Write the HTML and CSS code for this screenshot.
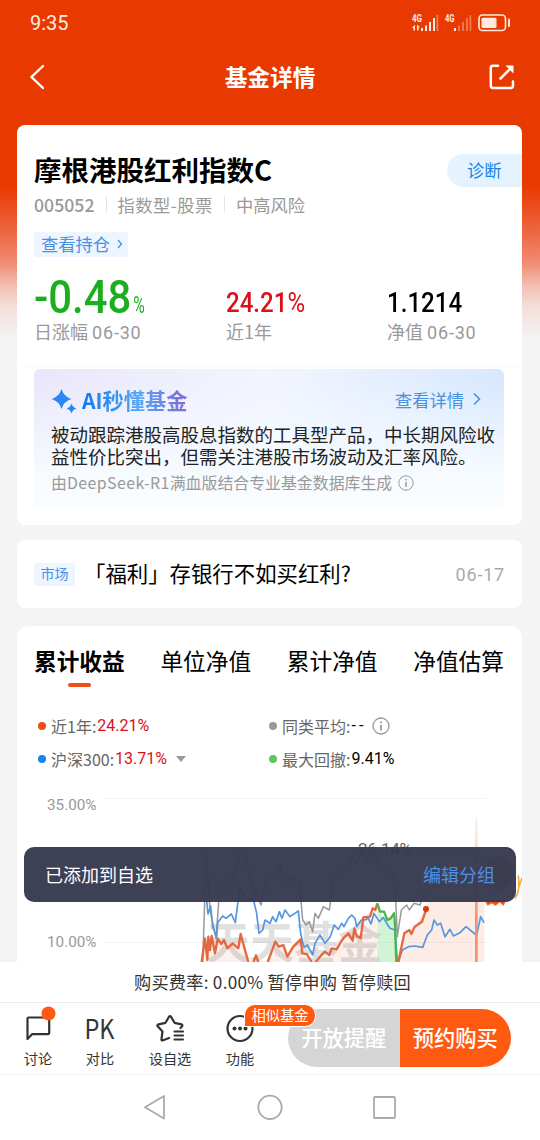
FILE: index.html
```html
<!DOCTYPE html>
<html lang="zh-CN">
<head>
    <meta charset="UTF-8">
    <meta name="viewport" content="width=device-width, initial-scale=1.0">
    <title>基金详情</title>
    <link rel="stylesheet" href="styles.css">
</head>
<body>
    <div class="status-bar">
        <span class="time">9:35</span>
        <svg class="status-icons" width="100" height="20" viewBox="411 13 100 20" fill="#ffe9e0">
            <text x="412" y="21.5" font-size="10" textLength="10" lengthAdjust="spacingAndGlyphs">4G</text>
            <path d="M412 28l3-3.5v6h-1.5V28zM417 24.5l3 3h-1.5v3H417z"/>
            <path d="M421 28h2v3h-2zM425 25.5h2v5.5h-2zM429 22h2v9h-2zM433 18h2v13h-2z"/>
            <path d="M436.5 15h1.8v16h-1.8z" opacity=".4"/>
            <text x="445" y="21.5" font-size="10" textLength="9.5" lengthAdjust="spacingAndGlyphs">4G</text>
            <path d="M454 28h2v3h-2z"/>
            <path d="M458 25.5h2v5.5h-2zM462 22h2v9h-2zM466 18h2v13h-2zM469.5 15h1.8v16h-1.8z" opacity=".35"/>
            <rect x="479" y="15" width="26.5" height="15.5" rx="3.5" fill="none" stroke="#ffe9e0" stroke-width="1.6"/>
            <rect x="481.5" y="17.7" width="15" height="10.2" rx="1.5"/>
            <rect x="508" y="18.5" width="2" height="8.5" rx="1"/>
        </svg>
    </div>

    <div class="nav-bar">
        <svg width="18" height="28" viewBox="0 0 18 28" fill="none" stroke="#fff" stroke-width="2.4" stroke-linecap="round"><path d="M14 3L2.5 14 14 25"/></svg>
        <h1 class="nav-title">基金详情</h1>
        <svg width="26" height="26" viewBox="0 0 26 26" fill="none" stroke="#fff" stroke-width="2.5" stroke-linecap="round"><path d="M9 1.800H4Q1.800 1.800 1.800 4V21.500Q1.800 24 4 24H21.500Q24 24 24 21.500V17.500M11.500 14.500L22 4"/><path d="M16.500 1.500H24.500V9.500z" fill="#fff" stroke="none"/></svg>
    </div>

    <main class="content">
        <section class="card fund-card">
            <div class="fund-info">
                <div class="fund-head">
                    <h2 class="fund-name">摩根港股红利指数C</h2>
                    <a class="diagnose">诊断</a>
                </div>
                <div class="fund-meta">
                    <span class="fund-code">005052</span>
                    <span class="fund-type">指数型-股票</span>
                    <span>中高风险</span>
                </div>
                <a class="holdings">查看持仓<svg width="6" height="10" viewBox="0 0 6 10" fill="none" stroke="#4a90e2" stroke-width="1.3"><path d="M1 1l3.500 4L1 9"/></svg></a>
                <div class="stats">
                    <div class="stat">
                        <div class="stat-value big green"><span class="din">-0.48<small>%</small></span></div>
                        <div class="stat-label">日涨幅 <span class="num">06-30</span></div>
                    </div>
                    <div class="stat">
                        <div class="stat-value red"><span class="din">24.21<i>%</i></span></div>
                        <div class="stat-label">近1年</div>
                    </div>
                    <div class="stat">
                        <div class="stat-value"><span class="din">1.1214</span></div>
                        <div class="stat-label">净值 <span class="num">06-30</span></div>
                    </div>
                </div>
            </div>
            <div class="ai-wrap">
                <div class="ai-box">
                    <div class="ai-head">
                        <svg width="27" height="26" viewBox="0 0 27 26" fill="#2e86f3"><path d="M10.500 1Q12.800 8.700 20.500 11 12.800 13.300 10.500 21 8.200 13.300.5 11 8.200 8.700 10.500 1z"/><path d="M20.500 15.500Q21.700 19.300 25.500 20.500 21.700 21.700 20.500 25.500 19.300 21.700 15.500 20.500 19.300 19.300 20.500 15.500z"/></svg>
                        <h3 class="ai-title">AI秒懂基金</h3>
                        <a class="ai-more">查看详情<svg width="8" height="14" viewBox="0 0 8 14" fill="none" stroke="#4a90e2" stroke-width="1.6"><path d="M1 1.500L6.500 7 1 12.500"/></svg></a>
                    </div>
                    <p class="ai-text">被动跟踪港股高股息指数的工具型产品，中长期风险收益性价比突出，但需关注港股市场波动及汇率风险。</p>
                    <p class="ai-source"><span>由<span class="model">DeepSeek-R1</span>满血版结合专业基金数据库生成</span><svg width="16" height="16" viewBox="0 0 16 16" fill="none" stroke="#999"><circle cx="8" cy="8" r="7.200"/><path d="M8 7v5M8 4v1.600" stroke-width="1.5"/></svg></p>
                </div>
            </div>
        </section>

        <section class="card news">
            <span class="news-tag">市场</span>
            <span class="news-title">「福利」存银行不如买红利?</span>
            <span class="news-date num">06-17</span>
        </section>

        <section class="card chart-card">
            <div class="tabs">
                <span class="tab active">累计收益</span>
                <span class="tab">单位净值</span>
                <span class="tab">累计净值</span>
                <span class="tab">净值估算</span>
            </div>
            <div class="legend">
                <div class="legend-item"><i class="dot orange"></i>近1年:<b class="red">24.21%</b></div>
                <div class="legend-item"><i class="dot gray"></i>同类平均:<b class="dashes">--</b><svg class="info" width="18" height="18" viewBox="0 0 18 18" fill="none" stroke="#999" stroke-width="1.3"><circle cx="9" cy="9" r="8"/><path d="M9 8v5.500M9 4.500v1.800" stroke-width="1.8"/></svg></div>
                <div class="legend-item"><i class="dot blue"></i>沪深300:<b class="red">13.71%</b><i class="caret"></i></div>
                <div class="legend-item"><i class="dot lime"></i>最大回撤:<b>9.41%</b></div>
            </div>
            <svg class="chart" width="505" height="172" viewBox="17 790 505 172">
                <path d="M104 798.500H486M104 942.500H486" stroke="#f3f3f3"/>
                <text x="47" y="810" class="axis" textLength="49.5" lengthAdjust="spacingAndGlyphs">35.00%</text>
                <text x="47" y="947" class="axis" textLength="49.5" lengthAdjust="spacingAndGlyphs">10.00%</text>
                <text x="206" y="959" class="watermark">天天基金</text>
                <g transform="translate(190 810) scale(.33333)" fill="none" stroke-linejoin="round">
                    <path d="M35 456L45 385 60 410 85 382 100 410 130 405 150 375 175 440 235 455 255 395 300 435 330 388 345 440 365 456 400 440 450 385 490 362 515 380 520 325 560 285 560 456z" fill="#ee6035" opacity=".09"/>
                    <path d="M562 285L578 325 608 320 615 340V456H562z" fill="#5bd765" opacity=".28"/>
                    <path d="M625 456L640 375 670 360 705 300 730 240 780 200 883 165V456z" fill="#f15a29" opacity=".12"/>
                    <path d="M38 456L44 280 48 125 60 300 78 385 88 250 110 220 120 240 128 200 142 160 150 125 165 120 180 210 195 245 213 285 225 225 240 190 252 200 270 165 280 215 305 205 328 215 338 330 348 345 358 335 368 365 375 310 385 325 400 290 418 300 430 215 450 185 470 180 480 140 500 160 515 125 530 160 550 110 575 180 605 190 615 220 622 380 634 300 650 285 658 300 672 280 690 285 705 240 740 220 780 225 820 205 860 215" stroke="#999" stroke-width="4.5"/>
                    <path d="M50 270L54 312 62 288 68 350 80 382 83 338 98 318 108 325 124 312 136 338 142 290 150 235 165 262 178 270 190 268 200 310 207 370 218 360 225 330 240 340 248 320 258 335 268 305 276 325 285 300 300 320 325 303 332 370 342 412 352 405 368 435 375 400 390 375 405 400 420 382 433 345 445 358 455 340 462 350 475 325 485 315 495 325 500 350 514 330 525 330 535 325 543 342 552 310 568 335 580 322 590 340 600 355 615 360 622 456M625 456L637 420 655 410 675 408 698 412 712 375 725 360 732 330 742 345 752 340 765 380 780 358 790 378 810 368 828 350 855 372 860 375 872 320 882 338" stroke="#5596df" stroke-width="5"/>
                    <path d="M35 456L45 385 52 450 55 380 60 420 65 378 75 430 83 386 94 402 102 390 112 415 128 400 145 415 152 372 160 402 175 456M190 456L198 436 205 456M233 456L256 395 267 410 280 405 292 440 310 410 332 388 337 430 350 432 365 456M377 456L390 440 405 425 418 435 425 415 440 418 450 400 460 385 475 370 488 392 493 355 500 378 512 385 520 322 540 320 548 295 556 300 562 280M625 456L643 370 658 360 664 372 674 350 696 335 708 300" stroke="#e56740" stroke-width="7"/>
                    <path d="M562 280L570 305 582 305 592 330 602 325 612 310 615 342 619 456" stroke="#49b54e" stroke-width="7"/>
                    <path d="M859 20V456" stroke="url(#stem)" stroke-width="8"/>
                    <path d="M695 118H860" stroke="#999" stroke-width="2"/>
                    <path d="M885 270L893 286 905 279 917 286 929 276 940 286 948 270" fill="#e8521f" stroke="#f1682d" stroke-width="3"/>
                    <path d="M976 264Q991 240 985 198M995 206L988 228" stroke="#f6ad3c" stroke-width="5" stroke-linecap="round"/>
                    <circle cx="922" cy="190" r="50" fill="#94492e" opacity=".4"/>
                    <circle cx="708" cy="297" r="9" fill="#d83b06"/>
                </g>
                <defs><linearGradient id="stem" gradientUnits="userSpaceOnUse" x1="0" y1="20" x2="0" y2="330"><stop stop-color="#f8a28a" stop-opacity=".1"/><stop offset="1" stop-color="#f09071"/></linearGradient></defs>
                <text x="358" y="855" class="peak" textLength="54">26.14%</text>
            </svg>
        </section>
    </main>

    <div class="toast"><span>已添加到自选</span><a>编辑分组</a></div>

    <footer>
        <div class="fee">购买费率: 0.00% 暂停申购 暂停赎回</div>
        <div class="toolbar">
            <div class="tool">
                <svg width="36" height="36" viewBox="20 1008 36 36" fill="none" stroke="#333" stroke-width="2.2" stroke-linejoin="round"><path d="M27.500 1039V1018.500Q27.500 1017.500 28.500 1017.500H48Q49.200 1017.500 49.200 1018.500V1033Q49.200 1034.200 48 1034.200H32z"/><circle cx="48.500" cy="1013.500" r="7" fill="#ff5a12" stroke="none"/></svg>
                <span>讨论</span>
            </div>
            <div class="tool">
                <svg width="36" height="36" viewBox="82 1008 36 36"><text x="84.500" y="1039" font-size="27" fill="#333" textLength="30" lengthAdjust="spacingAndGlyphs">PK</text></svg>
                <span>对比</span>
            </div>
            <div class="tool">
                <svg width="36" height="36" viewBox="152 1008 36 36" fill="none" stroke="#333" stroke-width="2.2" stroke-linejoin="round" stroke-linecap="round"><path d="M169 1038L162.500 1040.500Q161.300 1040.500 161.500 1039L162.500 1031.500 157.500 1026Q157 1024.800 158.500 1024.300L165.500 1022.800 169 1016.800Q170 1015.600 171 1016.800L174.500 1022.800 181.500 1024.300Q183 1025 182 1026.500L180.500 1028M174.500 1031.500H183M174.500 1035.500H183M174.500 1039.500H183"/></svg>
                <span>设自选</span>
            </div>
            <div class="tool">
                <svg width="36" height="36" viewBox="222 1008 36 36" fill="#333"><circle cx="240" cy="1028.500" r="12.500" fill="none" stroke="#333" stroke-width="2.2"/><circle cx="234.500" cy="1028.500" r="2"/><circle cx="240" cy="1028.500" r="2"/><circle cx="245.500" cy="1028.500" r="2"/></svg>
                <span>功能</span>
                <em class="badge">相似基金</em>
            </div>
            <div class="actions">
                <button class="btn remind">开放提醒</button>
                <button class="btn buy">预约购买</button>
            </div>
        </div>
        <div class="system-nav">
            <svg width="252" height="28" viewBox="144 1093 252 28" fill="none" stroke="#aaa" stroke-width="1.8" stroke-linejoin="round"><path d="M164 1096V1118.500L145 1107.300z"/><circle cx="270" cy="1107.300" r="11.700"/><rect x="374" y="1097" width="21" height="21" rx="1"/></svg>
        </div>
    </footer>
</body>
</html>
```

FILE: styles.css
```css
* {
    margin: 0;
    padding: 0;
    box-sizing: border-box;
}

body {
    font-family: 'Noto Sans CJK SC', sans-serif;
    width: 540px;
    height: 1140px;
    overflow: hidden;
    position: relative;
    display: flex;
    flex-direction: column;
    background: linear-gradient(#e83900 0, #e83900 185px, #ec5a2f 220px, #f08a70 262px, #f1bdb0 285px, #f3dfda 307px, #f4f4f4 340px);
}

svg {
    display: block;
    flex-shrink: 0;
}

.num {
    font-family: Roboto, sans-serif;
    letter-spacing: .8px;
}

.status-bar {
    height: 46px;
    padding: 0 29px 0 30px;
    display: flex;
    align-items: center;
    justify-content: space-between;
    color: #ffe9e0;
}

.time {
    font-family: Roboto, sans-serif;
    font-size: 20px;
}

.status-icons text {
    font-family: Roboto, sans-serif;
    font-weight: 700;
}

.nav-bar {
    height: 62px;
    padding: 0 25px 0 29px;
    display: flex;
    align-items: center;
    justify-content: space-between;
    color: #fff;
}

.nav-title {
    font-size: 22.7px;
    line-height: 30px;
    font-weight: 700;
    padding-left: 4px;
}

.content {
    height: 854px;
    padding: 17px 18px 0 17px;
    overflow: hidden;
    flex-shrink: 0;
}

.card {
    background: #fff;
    border-radius: 8px;
}

.fund-card {
    height: 400px;
    margin-bottom: 15px;
}

.fund-info {
    height: 242px;
    padding: 24px 0 0 17px;
    border-bottom: 1px solid #f8f8f8;
    border-radius: 8px;
}

.fund-head {
    display: flex;
    justify-content: space-between;
    align-items: center;
    height: 40px;
}

.fund-name {
    font-size: 27.5px;
    line-height: 40px;
    font-weight: 700;
    color: #000;
}

.diagnose {
    width: 75px;
    height: 33px;
    line-height: 32px;
    margin-top: 2px;
    padding-left: 20px;
    border-radius: 17px 0 0 17px;
    background: #e5f3ff;
    color: #1684e8;
    font-size: 17.3px;
}

.fund-meta {
    display: flex;
    align-items: center;
    height: 30px;
    font-size: 17.3px;
    color: #999;
}

.fund-meta span + span {
    margin-left: 11px;
    padding-left: 11px;
    border-left: 1px solid #e5e5e5;
    line-height: 17px;
}

.fund-type {
    letter-spacing: .5px;
}

.fund-code {
    font-size: 17.7px;
    font-weight: 500;
}

.holdings {
    display: flex;
    align-items: center;
    gap: 7px;
    width: 94px;
    height: 25px;
    margin-top: 13px;
    padding: 0 0 2px 7px;
    border-radius: 3px;
    background: #edf5ff;
    color: #4a90e2;
    font-size: 17.3px;
}

.stats {
    display: grid;
    grid-template-columns: 192px 161px 1fr;
    margin-top: 21px;
}

.stat-value {
    height: 41px;
    display: flex;
    align-items: flex-end;
    font-family: Roboto, sans-serif;
    font-size: 28px;
    line-height: 33px;
    font-weight: 500;
    color: #000;
}

.din {
    display: inline-block;
    transform: scaleX(.86);
    transform-origin: left bottom;
}

.stat-value i {
    font-style: normal;
    font-weight: 400;
}

.stat-value.big {
    font-size: 46px;
    line-height: 46px;
}

.big .din {
    margin-bottom: -9px;
    transform: scaleX(.91);
}

.stat-value small {
    font-size: 24px;
    font-weight: 400;
    display: inline-block;
    transform: scaleX(.72);
    transform-origin: left bottom;
    margin-left: 2px;
}

.stat-value.green {
    color: #1cae20;
}

.red,
.stat-value.red {
    color: #dc1018;
}

.stat-label {
    font-size: 18px;
    line-height: 24px;
    color: #999;
}

.ai-wrap {
    padding: 2px 18px 0 17px;
}

.ai-box {
    height: 138px;
    padding: 18px 9px 0 17px;
    border-radius: 6px 6px 0 0;
    background:
        linear-gradient(rgba(249, 252, 255, 0) 10%, #f6fbff 75%, #fafdff),
        linear-gradient(90deg, #e9e7fb, #f2f5ff 50%, #d8e8ff);
}

.ai-head {
    display: flex;
    align-items: center;
    height: 28px;
}

.ai-title {
    margin: -2px 0 0 4px;
    font-size: 21.2px;
    line-height: 28px;
    font-weight: 700;
    background: linear-gradient(90deg, #1479ed, #55a6f5 55%, #8168d8);
    -webkit-background-clip: text;
    background-clip: text;
    color: transparent;
}

.ai-more {
    display: flex;
    align-items: center;
    gap: 9px;
    margin: -4px 14px 0 auto;
    font-size: 17.3px;
    color: #4a90e2;
}

.ai-text {
    margin-top: 8px;
    font-size: 18.5px;
    line-height: 22px;
    color: #222;
}

.ai-source {
    display: flex;
    align-items: center;
    gap: 6px;
    margin-top: 4px;
    font-size: 15.9px;
    line-height: 23px;
    color: #999;
    white-space: nowrap;
}

.model {
    letter-spacing: .45px;
}

.news {
    display: flex;
    align-items: center;
    height: 68px;
    padding: 0 17px;
    margin-bottom: 18px;
}

.news-tag {
    width: 41px;
    height: 23px;
    line-height: 21px;
    text-align: center;
    border-radius: 3px;
    background: #edf5ff;
    color: #4a90e2;
    font-size: 14px;
}

.news-title {
    margin: -4px 0 0 9px;
    font-size: 21.4px;
    color: #000;
}

.news-date {
    margin-left: auto;
    font-size: 18px;
    color: #aaa;
}

.chart-card {
    height: 350px;
    border-radius: 12px;
}

.tabs {
    display: flex;
    justify-content: space-between;
    padding: 20px 18px 0 17px;
    height: 83px;
}

.tab {
    font-size: 22.7px;
    line-height: 30px;
    color: #000;
}

.tab.active {
    font-weight: 700;
}

.tab.active::after {
    content: '';
    display: block;
    width: 23px;
    height: 4px;
    margin: 7px auto 0;
    border-radius: 2px;
    background: #eb5016;
}

.legend {
    display: grid;
    grid-template-columns: 231px 1fr;
    grid-auto-rows: 33px;
    padding-left: 21px;
    height: 81px;
}

.legend-item {
    display: flex;
    align-items: center;
    font-size: 16px;
    color: #666;
}

.legend-item b {
    margin-left: 1px;
    font-family: Roboto, sans-serif;
    font-size: 16px;
    font-weight: 400;
    color: #000;
}

.legend-item b.red {
    color: #dc1018;
}

.legend-item b.dashes {
    letter-spacing: 3px;
}

.info {
    margin-left: 6px;
}

.dot {
    width: 8px;
    height: 8px;
    margin-right: 5px;
    border-radius: 50%;
}

.dot.orange { background: #e94f10; }
.dot.blue { background: #1684e8; }
.dot.gray { background: #999; }
.dot.lime { background: #5dc562; }

.caret {
    margin-left: 9px;
    border: 5px solid transparent;
    border-top: 6px solid #999;
    border-bottom: 0;
}

.axis {
    font-family: Roboto, sans-serif;
    font-size: 15.5px;
    fill: #999;
}

.peak {
    font-family: Roboto, sans-serif;
    font-size: 17px;
    fill: #666;
}

.watermark {
    font-size: 44px;
    font-weight: 700;
    fill: #888;
    opacity: .25;
}

.toast {
    position: absolute;
    left: 24px;
    top: 847px;
    width: 492px;
    height: 55px;
    padding: 0 21px 2px;
    display: flex;
    align-items: center;
    justify-content: space-between;
    border-radius: 10px;
    background: rgba(54, 56, 78, .96);
    color: #fff;
    font-size: 18px;
}

.toast a {
    color: #4a90e8;
}

footer {
    height: 178px;
    background: #fff;
}

.fee {
    height: 41px;
    line-height: 39px;
    text-align: center;
    font-size: 17.2px;
    letter-spacing: .25px;
    color: #333;
    padding-left: 5px;
    border-bottom: 1px solid #eee;
}

.toolbar {
    display: grid;
    grid-template-columns: 62px 62px 78px 62px 223px;
    height: 72px;
    padding-left: 7px;
    border-bottom: 1px solid #f2f2f2;
}

.tool {
    position: relative;
    display: flex;
    flex-direction: column;
    align-items: center;
    padding-top: 5px;
    font-size: 14.2px;
    line-height: 20px;
    color: #333;
}

.tool svg {
    overflow: visible;
}

.tool span {
    margin-top: 4px;
}

.badge {
    position: absolute;
    left: 35px;
    top: 1px;
    z-index: 1;
    width: 72px;
    height: 23px;
    border: 1px solid #fff;
    border-radius: 11px 11px 11px 0;
    background: #ff5a12;
    color: #fff;
    font-style: normal;
    font-size: 14.3px;
    line-height: 20px;
    text-align: center;
    white-space: nowrap;
}

.actions {
    display: flex;
    width: 223px;
    height: 58px;
    margin: 6px 0 0 17px;
}

.btn {
    flex: 1;
    padding-bottom: 3px;
    border: none;
    font-family: inherit;
    font-size: 21.3px;
    font-weight: 500;
    color: #fff;
}

.btn.remind {
    background: #d5d5d5;
    border-radius: 29px 0 0 29px;
}

.btn.buy {
    background: #ff5a12;
    border-radius: 0 29px 29px 0;
}

.system-nav {
    display: flex;
    justify-content: center;
    padding-top: 18px;
}
```
